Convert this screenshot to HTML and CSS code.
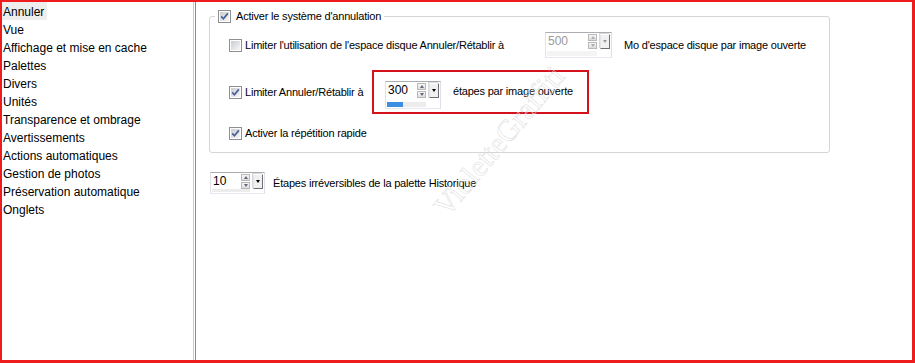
FILE: index.html
```html
<!DOCTYPE html>
<html lang="fr">
<head>
<meta charset="utf-8">
<title>Annuler</title>
<link rel="stylesheet" href="styles.css">
</head>
<body>
<svg class="defs" width="0" height="0" aria-hidden="true">
  <defs>
    <linearGradient id="cbg" x1="0" y1="0" x2="1" y2="1">
      <stop offset="0" stop-color="#c9ccd1"/>
      <stop offset="1" stop-color="#f7f7f7"/>
    </linearGradient>
  </defs>
</svg>
<div class="frame">
  <ul class="sidebar">
    <li class="item"><span class="sel">Annuler</span></li>
    <li class="item">Vue</li>
    <li class="item">Affichage et mise en cache</li>
    <li class="item">Palettes</li>
    <li class="item">Divers</li>
    <li class="item">Unités</li>
    <li class="item">Transparence et ombrage</li>
    <li class="item">Avertissements</li>
    <li class="item">Actions automatiques</li>
    <li class="item">Gestion de photos</li>
    <li class="item">Préservation automatique</li>
    <li class="item">Onglets</li>
  </ul>
  <div class="divider"></div>
  <div class="main">
    <div class="group">
      <div class="legend">
        <svg class="cb" width="13" height="13" viewBox="0 0 13 13"><rect x="0.5" y="0.5" width="12" height="12" fill="#fff" stroke="#8e8f8f"/><rect x="2" y="2" width="9" height="9" fill="url(#cbg)"/><path d="M3.2 6.4 L5.4 8.8 L9.8 3.4" stroke="#4b5f95" stroke-width="1.7" fill="none"/></svg>
        <span>Activer le système d'annulation</span>
      </div>
      <div class="row row1">
        <div class="check-label w316">
          <svg class="cb" width="13" height="13" viewBox="0 0 13 13"><rect x="0.5" y="0.5" width="12" height="12" fill="#fff" stroke="#8e8f8f"/><rect x="2" y="2" width="9" height="9" fill="url(#cbg)"/></svg>
          <span>Limiter l'utilisation de l'espace disque Annuler/Rétablir à</span>
        </div>
        <div class="spin spin-500 disabled">
          <div class="spin-body">
            <div class="spin-top"><span class="spin-val">500</span><span class="spin-arrows"><i class="arr up"></i><i class="arr down"></i></span></div>
            <div class="spin-bar"></div>
          </div>
          <div class="spin-drop"><i class="tri"></i></div>
        </div>
        <span class="after">Mo d'espace disque par image ouverte</span>
      </div>
      <div class="row row2">
        <div class="check-label w143">
          <svg class="cb" width="13" height="13" viewBox="0 0 13 13"><rect x="0.5" y="0.5" width="12" height="12" fill="#fff" stroke="#8e8f8f"/><rect x="2" y="2" width="9" height="9" fill="url(#cbg)"/><path d="M3.2 6.4 L5.4 8.8 L9.8 3.4" stroke="#4b5f95" stroke-width="1.7" fill="none"/></svg>
          <span>Limiter Annuler/Rétablir à</span>
        </div>
        <div class="redbox">
          <div class="spin spin-300">
            <div class="spin-body">
              <div class="spin-top"><span class="spin-val">300</span><span class="spin-arrows"><i class="arr up"></i><i class="arr down"></i></span></div>
              <div class="spin-bar"><div class="spin-fill" style="width:40%"></div></div>
            </div>
            <div class="spin-drop"><i class="tri"></i></div>
          </div>
          <span class="red-text">étapes par image ouverte</span>
        </div>
      </div>
      <div class="row row3">
        <div class="check-label">
          <svg class="cb" width="13" height="13" viewBox="0 0 13 13"><rect x="0.5" y="0.5" width="12" height="12" fill="#fff" stroke="#8e8f8f"/><rect x="2" y="2" width="9" height="9" fill="url(#cbg)"/><path d="M3.2 6.4 L5.4 8.8 L9.8 3.4" stroke="#4b5f95" stroke-width="1.7" fill="none"/></svg>
          <span>Activer la répétition rapide</span>
        </div>
      </div>
    </div>
    <div class="history">
      <div class="spin spin-10">
        <div class="spin-body">
          <div class="spin-top"><span class="spin-val">10</span><span class="spin-arrows"><i class="arr up"></i><i class="arr down"></i></span></div>
          <div class="spin-bar"></div>
        </div>
        <div class="spin-drop"><i class="tri"></i></div>
      </div>
      <span>Étapes irréversibles de la palette Historique</span>
    </div>
  </div>
  <div class="watermark">VioletteGraffiti</div>
</div>
</body>
</html>
```
FILE: styles.css
```css
html, body {
  margin: 0;
  padding: 0;
  background: #fff;
}
.defs {
  display: block;
  width: 0;
  height: 0;
  overflow: hidden;
}
.frame {
  width: 915px;
  height: 363px;
  box-sizing: border-box;
  border-style: solid;
  border-color: #ee1c1c;
  border-width: 2px 3px 3px 2px;
  display: flex;
  position: relative;
  background: #fff;
  overflow: hidden;
  color: #000;
}
.sidebar {
  list-style: none;
  margin: 0;
  padding: 0;
  width: 191px;
  flex: none;
  border-right: 1px solid #cacaca;
  font-family: "Liberation Sans", Arial, sans-serif;
  font-size: 12px;
}
.item {
  height: 18px;
  line-height: 21px;
  padding-left: 1px;
  white-space: nowrap;
}
.sel {
  display: inline-block;
  height: 18px;
  background: #eeeeee;
  margin-left: -1px;
  padding: 0 3px 0 1px;
}
.divider {
  flex: none;
  width: 1px;
  margin-left: 1px;
  background: #8c8c8c;
}
.main {
  flex: 1;
  padding: 14px 0 0 13px;
  font-family: "Liberation Sans", Arial, sans-serif;
  font-size: 11px;
  letter-spacing: -0.2px;
  white-space: nowrap;
}
.group {
  position: relative;
  width: 621px;
  box-sizing: border-box;
  border: 1px solid #d5d5d5;
  border-radius: 3px;
  padding: 15px 0 10px 19px;
}
.legend {
  position: absolute;
  top: -8px;
  left: 5px;
  height: 14px;
  padding: 0 3px;
  background: #fff;
  display: flex;
  align-items: center;
  gap: 5px;
}
.cb {
  display: block;
  flex: none;
}
.row {
  display: flex;
  align-items: center;
}
.row1 {
  height: 26px;
}
.row2 {
  margin-top: 12px;
  height: 44px;
}
.row3 {
  margin-top: 10px;
  height: 18px;
}
.check-label {
  display: flex;
  align-items: center;
  gap: 3px;
  flex: none;
}
.w316 {
  width: 316px;
}
.w143 {
  width: 143px;
}
.after {
  margin-left: 12px;
}
.redbox {
  width: 217px;
  height: 44px;
  box-sizing: border-box;
  border: 2px solid #d4121c;
  display: flex;
  align-items: center;
  padding-left: 11px;
  gap: 12px;
}
.red-text {
  margin-top: -2px;
}

/* spin box */
.spin {
  display: flex;
  flex: none;
  box-sizing: border-box;
  border: 1px solid;
  border-color: #abadb3 #dbdfe6 #e3e9ef #e2e3ea;
  background: #fff;
  padding: 1px;
  gap: 3px;
  letter-spacing: 0;
}
.spin-body {
  flex: 1;
  display: flex;
  flex-direction: column;
}
.spin-top {
  display: flex;
  align-items: flex-start;
}
.spin-val {
  flex: 1;
  padding-left: 1px;
  font-size: 12px;
  line-height: 15px;
}
.spin-arrows {
  display: flex;
  flex-direction: column;
  width: 9px;
  gap: 1px;
}
.arr {
  display: flex;
  align-items: center;
  justify-content: center;
  height: 7px;
  box-sizing: border-box;
  border: 1px solid #b9b9b9;
  background: linear-gradient(#f6f6f6, #dddddd);
}
.arr::before {
  content: "";
  width: 0;
  height: 0;
  border-left: 2.5px solid transparent;
  border-right: 2.5px solid transparent;
}
.arr.up::before {
  border-bottom: 3px solid #5d6a7c;
}
.arr.down::before {
  border-top: 3px solid #5d6a7c;
}
.spin-bar {
  height: 5px;
  margin-top: auto;
  background: #ececec;
}
.spin-fill {
  height: 100%;
  background: #3d8ee0;
}
.spin-drop {
  width: 10px;
  height: 15px;
  flex: none;
  box-sizing: border-box;
  border: 1px solid;
  border-color: #ffffff #6e6e6e #6e6e6e #e4e4e4;
  background: #f0f0f0;
  display: flex;
  align-items: center;
  justify-content: center;
  box-shadow: -1px -1px 0 #d8d8d8;
}
.tri {
  width: 0;
  height: 0;
  border-left: 2.5px solid transparent;
  border-right: 2.5px solid transparent;
  border-top: 3px solid #000;
}
.spin-500 {
  width: 67px;
  height: 26px;
}
.spin-300 {
  width: 56px;
  height: 28px;
  align-self: flex-start;
  margin-top: 9px;
}
.spin-10 {
  width: 55px;
  height: 22px;
}
.disabled .spin-val {
  color: #9a9a9a;
}
.disabled .arr.up::before {
  border-bottom-color: #a8b0ba;
}
.disabled .arr.down::before {
  border-top-color: #a8b0ba;
}
.disabled .tri {
  border-top-color: #9a9a9a;
}
.disabled .spin-bar {
  background: #f4f4f4;
}
.history {
  display: flex;
  align-items: center;
  gap: 8px;
  margin: 19px 0 0 1px;
}
.watermark {
  position: absolute;
  left: 405px;
  top: 122px;
  font-family: "Liberation Serif", serif;
  font-size: 30px;
  color: transparent;
  -webkit-text-stroke: 0.5px #dcdcdc;
  transform: rotate(-50deg);
  transform-origin: center;
  white-space: nowrap;
  pointer-events: none;
}
```
